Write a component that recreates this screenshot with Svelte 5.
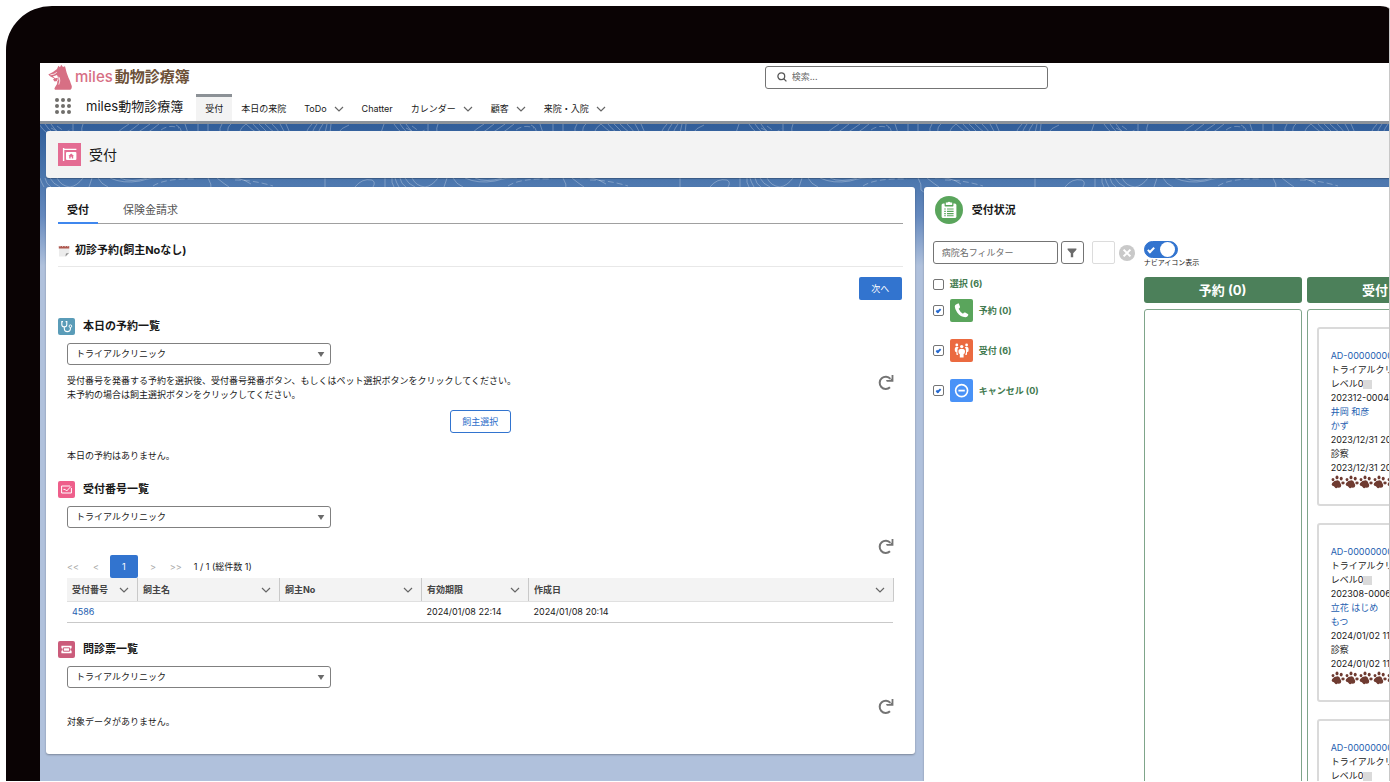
<script>
  const navItems = [
    { label: "受付", active: true },
    { label: "本日の来院" },
    { label: "ToDo", menu: true },
    { label: "Chatter" },
    { label: "カレンダー", menu: true },
    { label: "顧客", menu: true },
    { label: "来院・入院", menu: true },
  ];

  const columns = [
    { label: "受付番号", key: "no" },
    { label: "飼主名", key: "owner" },
    { label: "飼主No", key: "ownerNo" },
    { label: "有効期限", key: "expires" },
    { label: "作成日", key: "created" },
  ];

  const receptions = [
    {
      no: "4586",
      owner: "",
      ownerNo: "",
      expires: "2024/01/08 22:14",
      created: "2024/01/08 20:14",
    },
  ];

  const cards = [
    {
      id: "AD-00000000",
      karte: "202312-0004",
      owner: "井岡 和彦",
      pet: "かず",
      date: "2023/12/31 20",
    },
    {
      id: "AD-00000000",
      karte: "202308-0006",
      owner: "立花 はじめ",
      pet: "もつ",
      date: "2024/01/02 11",
    },
    {
      id: "AD-00000000",
      karte: "202308-0006",
      owner: "立花 はじめ",
      pet: "もつ",
      date: "2024/01/02 11",
    },
  ];

  let statuses = [
    { id: "reserved", label: "予約 (0)", checked: true },
    { id: "received", label: "受付 (6)", checked: true },
    { id: "cancelled", label: "キャンセル (0)", checked: true },
  ];

  let selectAll = false;
  let showNavIcons = true;
  let hospital = "";
</script>

{#snippet chevron()}
  <svg class="chevron" viewBox="0 0 10 10" aria-hidden="true">
    <path d="M1 3 L5 7 L9 3" />
  </svg>
{/snippet}

{#snippet clinicSelect(id)}
  <div class="select">
    <select {id} aria-label="クリニック">
      <option>トライアルクリニック</option>
    </select>
    <svg viewBox="0 0 8 6" aria-hidden="true"><path d="M0 0 H8 L4 6 Z" /></svg>
  </div>
{/snippet}

{#snippet refresh()}
  <button class="refresh" aria-label="更新">
    <svg viewBox="0 0 16 16" aria-hidden="true">
      <path class="arc" d="M12 12.8 A6.1 6.1 0 1 1 12.4 4.4" />
      <path class="tip" d="M15.4 0.6 V7.2 H8.8 L8 5.4 H12.2 L13.6 4 V0.6 Z" />
    </svg>
  </button>
{/snippet}

<div class="device">
  <div class="screen">
    <header class="header">
      <div class="topbar">
        <a href="/" class="logo">
          <svg viewBox="0 0 25 27" aria-hidden="true">
            <path
              class="dog"
              d="M0.3 10.6 L5 8 L9 5 L10.4 1.8 L12 3.2 L13.2 0.8 L15 3 L17 2.2 L18.6 8.4 L20.4 13.6 Q22 16.6 22.8 19.6 Q25 24 22.4 25.8 H7 Q5.8 24.8 7 23.2 Q9.8 20.4 9.4 17 L6.6 17.4 L5 15.4 L6.4 14.4 L2.4 12.6 Z"
            />
            <path
              class="fur"
              d="M2.4 10.8 L6 10.2 L8.8 8.4 M9.4 17 Q10.6 15 10 12.6 M11.4 13.4 Q12.4 17 10.8 20.6"
            />
            <path class="muzzle" d="M4.8 12.4 L9 11 L10 13.8 L7.2 14.2 Z" />
          </svg>
          <span class="brand">miles<b>動物診療簿</b></span>
        </a>
        <div class="search">
          <svg viewBox="0 0 10 10" aria-hidden="true">
            <circle cx="4.3" cy="4.3" r="3.4" />
            <path d="M6.9 6.9 L9.4 9.4" />
          </svg>
          <input type="search" placeholder="検索..." aria-label="検索" />
        </div>
      </div>

      <nav class="navbar">
        <button class="launcher" aria-label="アプリケーションランチャー">
          {#each Array(9) as _}
            <span></span>
          {/each}
        </button>
        <span class="app-name">miles動物診療簿</span>
        <ul class="nav-links">
          {#each navItems as item}
            <li class:active={item.active}>
              <a href="#nav">{item.label}</a>
              {#if item.menu}{@render chevron()}{/if}
            </li>
          {/each}
        </ul>
      </nav>
    </header>

    <main class="main">
      <svg class="backdrop" aria-hidden="true">
        <defs>
          <pattern
            id="contour"
            x="310"
            width="355"
            height="150"
            patternUnits="userSpaceOnUse"
          >
            <g>
              <path
                d="M34 0 Q31 6 31 14 M44 0 Q47 5 52 9 M50 0 Q53 5 58 9 M56 0 Q59 5 64 9 M78 0 V8 M88 0 Q86 4 87 9 M122 9 Q126 5 134 0 M132 9 Q138 5 144 0 M142 9 Q148 5 155 0 M152 9 Q158 5 164 0 M181 1 Q187 4 186 9 M190 0 L193 9 M203 0 V8 M213 0 V8 M225 9 Q224 4 227 0 M233 9 Q232 3 236 0 M244 9 Q246 3 251 0 Q256 5 262 9 M258 0 Q262 5 267 9 M264 0 Q269 5 273 9 M270 0 Q275 5 280 9 M277 0 Q281 4 285 9 M285 0 L290 9 M291 0 L295 9 M311 9 Q313 4 317 0 M317 9 Q319 4 322 0 M323 9 Q325 4 328 0 M330 9 L332 0 M335 9 L336 0 M343 9 Q346 4 354 1"
              />
              <path
                d="M5 63 Q12 54 22 56 Q26 58 23 63 M35 54 V63 M42 54 Q41 58 44 63 M45 54 Q46 58 49 63 M50 54 Q51 60 56 63 M55 54 Q58 60 65 63 M62 54 Q66 62 75 63 Q82 62 88 54 M97 54 L94 63 M103 54 Q106 60 113 63 M115 54 Q128 60 145 57 Q158 53 167 54 M125 54 Q136 59 152 54 M213 54 Q217 60 216 66 Q226 76 234 63 M222 54 Q228 59 234 63 M230 54 Q244 52 256 60 M330 54 V63"
              />
              <path
                class="dashed"
                d="M62 2 L70 8 Q73 8 77 4 M166 6 Q174 0 184 4 M158 62 Q170 54 202 55 M240 56 Q258 56 278 62 M56 4 L66 9"
              />
              <path
                d="M248 63 Q242 84 252 96 Q262 110 250 130 M262 63 Q250 80 262 100 Q270 116 258 136 M40 63 Q30 84 42 108 Q50 124 36 144 M84 63 Q80 100 94 130"
              />
            </g>
          </pattern>
          <linearGradient id="fade" x1="0" y1="0" x2="0" y2="1">
            <stop offset="0" stop-color="#315e9a" />
            <stop offset="0.4" stop-color="#4c77ae" />
            <stop offset="0.65" stop-color="#6589be" />
            <stop offset="1" stop-color="#b0c1dc" />
          </linearGradient>
        </defs>
        <rect width="100%" height="100%" fill="url(#fade)" />
        <rect width="100%" height="100%" fill="url(#contour)" />
      </svg>

      <div class="page-header">
        <svg class="page-icon" viewBox="0 0 23 23" aria-hidden="true">
          <rect width="23" height="23" fill="#e46c93" />
          <path
            d="M5.6 5 V18 M5 6.4 H18.4"
            stroke="#fff"
            stroke-width="1.4"
            fill="none"
          />
          <rect x="8" y="9" width="10.4" height="8" rx="1" fill="#fff" />
          <path
            d="M13.2 10.4 L16 13 H15.2 V15.4 H13.8 V13.8 H12.6 V15.4 H11.2 V13 H10.4 Z"
            fill="#e46c93"
          />
        </svg>
        <h1>受付</h1>
      </div>

      <div class="panels">
        <section class="panel reception">
          <div class="tabs" role="tablist">
            <button role="tab" class="selected" aria-selected="true">受付</button>
            <button role="tab" aria-selected="false">保険金請求</button>
          </div>

          <div class="first-visit">
            <svg viewBox="0 0 12 12" aria-hidden="true">
              <path d="M1 1 H11.4 V8 L8.4 11.4 H1 Z" fill="#ececec" />
              <path d="M0.8 1 H11.2 V3.6 H0.8 Z" fill="#b0584f" />
              <path d="M2 0.4 V2 M4.6 0.4 V2 M7.2 0.4 V2 M9.8 0.4 V2" stroke="#eee" stroke-width="0.7" />
              <path d="M11 8 L8 8.6 L7.4 11.4 Z" fill="#8b8b8b" />
            </svg>
            <h2>初診予約(飼主Noなし)</h2>
          </div>
          <div class="next">
            <button class="primary">次へ</button>
          </div>

          <section class="block">
            <div class="block-title">
              <svg viewBox="0 0 17 17" aria-hidden="true">
                <rect width="17" height="17" rx="2" fill="#5a9cb8" />
                <path
                  d="M5 3.6 H3.8 V6.4 A2.5 2.5 0 0 0 8.8 6.4 V3.6 H7.6 M6.3 9 V10.6 A3 3 0 0 0 12.4 10.6 V9.4"
                  stroke="#fff"
                  stroke-width="1.1"
                  fill="none"
                />
                <circle cx="12.4" cy="8.2" r="1.3" stroke="#fff" fill="none" />
              </svg>
              <h2>本日の予約一覧</h2>
            </div>
            <div class="block-body">
              {@render clinicSelect("clinic-today")}
              <div class="guide">
                <p>
                  受付番号を発番する予約を選択後、受付番号発番ボタン、もしくはペット選択ボタンをクリックしてください。<br
                  />未予約の場合は飼主選択ボタンをクリックしてください。
                </p>
                {@render refresh()}
              </div>
              <div class="choose">
                <button class="outline">飼主選択</button>
              </div>
              <p>本日の予約はありません。</p>
            </div>
          </section>

          <section class="block">
            <div class="block-title">
              <svg viewBox="0 0 17 17" aria-hidden="true">
                <rect width="17" height="17" rx="2" fill="#ee5f8b" />
                <path
                  d="M12 5 H3.6 V12 H13.4 V7 M5.4 8.4 H7.2 L8.6 10 L13 5.4"
                  stroke="#fff"
                  stroke-width="1"
                  fill="none"
                />
              </svg>
              <h2>受付番号一覧</h2>
            </div>
            <div class="block-body">
              {@render clinicSelect("clinic-number")}
              <div class="tools">{@render refresh()}</div>
              <div class="pager">
                <button class="first" disabled>&lt;&lt;</button>
                <button class="prev" disabled>&lt;</button>
                <button class="current">1</button>
                <button class="following" disabled>&gt;</button>
                <button class="last" disabled>&gt;&gt;</button>
                <span>1 / 1 (総件数 1)</span>
              </div>
              <table>
                <thead>
                  <tr>
                    {#each columns as column}
                      <th class={column.key}>
                        <div>{column.label}{@render chevron()}</div>
                      </th>
                    {/each}
                  </tr>
                </thead>
                <tbody>
                  {#each receptions as row}
                    <tr>
                      <td><a href="#reception">{row.no}</a></td>
                      <td>{row.owner}</td>
                      <td>{row.ownerNo}</td>
                      <td>{row.expires}</td>
                      <td>{row.created}</td>
                    </tr>
                  {/each}
                </tbody>
              </table>
            </div>
          </section>

          <section class="block">
            <div class="block-title">
              <svg viewBox="0 0 17 17" aria-hidden="true">
                <rect width="17" height="17" rx="2" fill="#cb5c7b" />
                <path
                  d="M3.4 4.8 H13.6 V7.2 A1.3 1.3 0 0 0 13.6 9.8 V12.2 H3.4 V9.8 A1.3 1.3 0 0 0 3.4 7.2 Z"
                  fill="#fff"
                />
                <path d="M5.4 6.8 H11.6 V10.2 H5.4 Z" fill="#fff" stroke="#cb5c7b" stroke-width="1" />
              </svg>
              <h2>問診票一覧</h2>
            </div>
            <div class="block-body">
              {@render clinicSelect("clinic-sheet")}
              <div class="tools">{@render refresh()}</div>
              <p>対象データがありません。</p>
            </div>
          </section>
        </section>

        <section class="panel status">
          <div class="status-title">
            <svg viewBox="0 0 28 28" aria-hidden="true">
              <circle cx="14" cy="14" r="14" fill="#5aa55c" />
              <rect x="6.6" y="7.4" width="14.8" height="14.6" rx="1.6" fill="#fff" />
              <path
                d="M9.6 7 H18.4 V9.4 Q18.4 10.6 17.2 10.6 H10.8 Q9.6 10.6 9.6 9.4 Z"
                fill="#5aa55c"
              />
              <path d="M10.8 6.4 H12.4 Q14 5 15.6 6.4 H17.2 V9 H10.8 Z" fill="#fff" />
              <path
                d="M9.2 13 H10.8 M12 13 H18.6 M9.2 15.4 H10.8 M12 15.4 H18.6 M9.2 17.6 H10.8 M12 17.6 H18.6 M9.2 19.8 H10.8 M12 19.8 H18.6"
                stroke="#5aa55c"
                stroke-width="1.1"
              />
            </svg>
            <h2>受付状況</h2>
          </div>

          <div class="status-body">
            <div class="filters">
              <div class="filter-row">
                <input
                  type="text"
                  placeholder="病院名フィルター"
                  aria-label="病院名フィルター"
                  bind:value={hospital}
                />
                <button class="filter" aria-label="フィルター">
                  <svg viewBox="0 0 10 10" aria-hidden="true">
                    <path d="M0.6 0.6 H9.4 V1.8 L6.2 5.2 V9.2 H3.8 V5.2 L0.6 1.8 Z" />
                  </svg>
                </button>
                <button class="blank" aria-label="色"></button>
                <button class="clear" aria-label="クリア">
                  <svg viewBox="0 0 16 16" aria-hidden="true">
                    <circle cx="8" cy="8" r="8" fill="#c9c9c9" />
                    <path d="M4.6 4.6 L11.4 11.4 M11.4 4.6 L4.6 11.4" stroke="#fff" stroke-width="2" />
                  </svg>
                </button>
              </div>

              <label class="check all">
                <input type="checkbox" bind:checked={selectAll} />
                選択 (6)
              </label>
              {#each statuses as status}
                <label class="check">
                  <input type="checkbox" bind:checked={status.checked} />
                  <svg viewBox="0 0 23 23" aria-hidden="true">
                    {#if status.id === "reserved"}
                      <rect width="23" height="23" rx="2" fill="#5aa55c" />
                      <path
                        d="M6 5.4 L8 4.4 Q8.6 4.2 9 5 L10 7.8 Q10.2 8.6 9.4 9.2 L8.6 9.8 Q10 13 13 14.8 L13.8 13.8 Q14.4 13.2 15.2 13.6 L17.8 15 Q18.6 15.4 18.2 16.2 Q17.4 18.2 15.4 18.2 Q10.4 17.8 7.2 13.4 Q4.8 10 4.8 7.4 Q4.8 6 6 5.4 Z"
                        fill="#fff"
                      />
                    {:else if status.id === "received"}
                      <rect width="23" height="23" rx="2" fill="#eb6a40" />
                      <g fill="#fff">
                        <circle cx="11.7" cy="7.6" r="1.7" />
                        <path d="M10 10 H13.4 Q15.4 10.4 15 12.8 L14.6 14.4 L13.6 15 V18.4 H9.8 V15 L8.8 14.4 L8.4 12.8 Q8 10.4 10 10 Z" />
                        <circle cx="6.8" cy="6" r="1.4" />
                        <circle cx="16.6" cy="6" r="1.4" />
                        <path d="M6 8 H8.6 Q6.8 10 7.4 13.2 L8.2 16 L6.4 15.8 V13.2 L5 12.4 Q4.2 8.8 6 8 Z" />
                        <path d="M17.4 8 H14.8 Q16.6 10 16 13.2 L15.2 16 L17 15.8 V13.2 L18.4 12.4 Q19.2 8.8 17.4 8 Z" />
                      </g>
                    {:else}
                      <rect width="23" height="23" rx="2" fill="#4992f7" />
                      <circle cx="11.6" cy="11.6" r="6" fill="none" stroke="#fff" stroke-width="1.6" />
                      <path d="M8.4 11.6 H14.8" stroke="#fff" stroke-width="1.8" />
                    {/if}
                  </svg>
                  {status.label}
                </label>
              {/each}
            </div>

            <div class="board">
              <label class="toggle">
                <input type="checkbox" role="switch" bind:checked={showNavIcons} />
                <span>ナビアイコン表示</span>
              </label>
              <div class="lanes">
                <div class="lane">
                  <h3>予約 (0)</h3>
                  <div class="lane-body"></div>
                </div>
                <div class="lane">
                  <h3>受付 (6)</h3>
                  <div class="lane-body">
                    {#each cards as card}
                      <article class="card">
                        <a href="#record">{card.id}</a>
                        <span>トライアルクリニック</span>
                        <span class="level">レベル0<i></i></span>
                        <span>{card.karte}</span>
                        <a href="#owner">{card.owner}</a>
                        <a href="#pet">{card.pet}</a>
                        <span>{card.date}</span>
                        <span>診察</span>
                        <span>{card.date}</span>
                        <div class="paws">
                          {#each Array(5) as _}
                            <svg viewBox="0 0 14 14" aria-hidden="true">
                              <path d="M1.2 8 Q3 5.4 6.6 5.2 Q8.8 5.6 9.2 7.8 Q11 10 9.8 12 Q8.6 13 6.6 12.6 Q4.8 14 3.8 12.2 Q3.2 11.2 1.4 10.8 Q0 9.6 1.2 8 Z" />
                              <ellipse cx="2" cy="4.6" rx="1.4" ry="1.7" />
                              <ellipse cx="6" cy="2.4" rx="1.5" ry="1.9" />
                              <ellipse cx="10.2" cy="3.6" rx="1.5" ry="1.9" />
                              <ellipse cx="12" cy="8" rx="1.7" ry="1.4" />
                            </svg>
                          {/each}
                        </div>
                      </article>
                    {/each}
                  </div>
                </div>
              </div>
            </div>
          </div>
        </section>
      </div>
    </main>
  </div>
</div>

<style>
  :global(body) {
    background: #fff;
    color: #181818;
    font-family: Inter, "Noto Sans CJK JP", sans-serif;
    font-size: 9px;
    line-height: 14px;
  }

  h1,
  h2,
  h3,
  p,
  ul {
    margin: 0;
    padding: 0;
  }

  button,
  input,
  select {
    box-sizing: border-box;
    font: inherit;
    color: inherit;
    margin: 0;
    padding: 0;
  }

  button {
    background: none;
    border: 0;
    cursor: pointer;
  }

  svg {
    display: block;
    flex: none;
  }

  a {
    color: #2460b0;
    text-decoration: none;
  }

  h2 {
    font-size: 11px;
    font-weight: 700;
    line-height: 17px;
  }

  .device {
    box-sizing: border-box;
    height: calc(100vh - 7px);
    margin: 6px 0 1px 6px;
    padding: 57px 0 0 34px;
    background: #0a0304;
    border-right: 1px solid #c8c8c8;
    border-radius: 46px 10px 0 0 / 44px 3px 0 0;
    overflow: hidden;
  }

  .screen {
    height: 100%;
    background: #b0c1dc;
    display: flex;
    flex-direction: column;
    overflow: hidden;
  }

  /* header */
  .header {
    background: #fff;
    border-bottom: 3px solid #8c939b;
  }

  .topbar {
    display: grid;
    grid-template-columns: 21fr 283px 10fr;
    align-items: center;
    height: 28px;
    padding-left: 8px;
  }

  .logo {
    display: flex;
    align-items: center;
    gap: 2px;
  }

  .logo svg {
    width: 25px;
    height: 27px;
  }

  .dog {
    fill: #d76f84;
  }

  .fur {
    fill: none;
    stroke: #fff;
    stroke-width: 0.8;
  }

  .muzzle {
    fill: #fff;
  }

  .brand {
    color: #d76f84;
    font-size: 15px;
    line-height: 20px;
    font-weight: 500;
  }

  .brand b {
    margin-left: 2px;
    color: #6d5138;
  }

  .search {
    display: flex;
    align-items: center;
    gap: 5px;
    box-sizing: border-box;
    height: 23px;
    padding: 0 11px;
    border: 1px solid #747474;
    border-radius: 3px;
  }

  .search svg {
    width: 10px;
    height: 10px;
    fill: none;
    stroke: #555;
    stroke-width: 1.3;
  }

  .search input {
    flex: 1;
    min-width: 0;
    border: 0;
    outline: 0;
    background: none;
  }

  input::placeholder {
    color: #6b6b6b;
    opacity: 1;
  }

  .navbar {
    display: flex;
    align-items: center;
    height: 30px;
    padding-left: 15px;
  }

  .launcher {
    display: grid;
    grid-template-columns: repeat(3, 4px);
    gap: 2px;
    margin-right: 15px;
  }

  .launcher span {
    width: 4px;
    height: 4px;
    border-radius: 50%;
    background: #706e6b;
  }

  .app-name {
    margin-right: 13px;
    font-size: 13px;
    line-height: 20px;
  }

  .nav-links {
    display: flex;
    align-self: flex-end;
    list-style: none;
  }

  .nav-links li {
    display: flex;
    align-items: center;
    gap: 7px;
    height: 24px;
    padding: 0 9px;
    border-top: 3px solid transparent;
  }

  .nav-links li.active {
    background: #f3f3f3;
    border-color: #8c9196;
  }

  .nav-links a {
    color: #181818;
  }

  .chevron {
    width: 10px;
    height: 10px;
    fill: none;
    stroke: #666;
    stroke-width: 1.2;
  }

  /* page */
  .main {
    position: relative;
    flex: 1;
    min-height: 0;
    display: flex;
    flex-direction: column;
    gap: 9px;
    padding: 7px 0 0 6px;
  }

  .backdrop {
    position: absolute;
    top: 0;
    left: 0;
    width: 100%;
    height: 142px;
  }

  .backdrop path {
    fill: none;
    stroke: #fff;
    stroke-opacity: 0.28;
    stroke-width: 1;
  }

  .backdrop .dashed {
    stroke-dasharray: 6 3;
  }

  .page-header {
    position: relative;
    display: flex;
    align-items: center;
    gap: 8px;
    height: 47px;
    padding-left: 12px;
    background: #f3f3f3;
    border-radius: 3px 0 0 3px;
    box-shadow: 0 1px 1px rgba(0, 0, 0, 0.25);
  }

  .page-icon {
    width: 23px;
    height: 23px;
  }

  h1 {
    font-size: 14px;
    line-height: 20px;
    font-weight: 400;
  }

  .panels {
    position: relative;
    flex: 1;
    min-height: 0;
    display: grid;
    grid-template-columns: minmax(0, 28fr) minmax(0, 15fr);
    gap: 9px;
  }

  .panel {
    background: #fff;
    border-radius: 3px;
    box-shadow: 0 1px 2px rgba(0, 0, 0, 0.3);
  }

  .reception {
    align-self: start;
    padding: 8px 12px 25px;
  }

  .tabs {
    display: flex;
    gap: 16px;
    border-bottom: 1px solid #a0a0a0;
  }

  .tabs button {
    height: 29px;
    padding: 2px 9px 0;
    margin-bottom: -1px;
    border-bottom: 2px solid transparent;
    font-size: 11px;
    color: #555;
  }

  .tabs .selected {
    border-color: #3f87ee;
    color: #181818;
    font-weight: 700;
  }

  .first-visit {
    display: flex;
    align-items: center;
    gap: 5px;
    padding: 18px 0 7px;
    border-bottom: 1px solid #e8e8e8;
  }

  .first-visit svg {
    width: 12px;
    height: 12px;
  }

  .next {
    display: flex;
    justify-content: flex-end;
    padding: 10px 1px 0 0;
  }

  .primary {
    width: 43px;
    height: 23px;
    border-radius: 2px;
    background: #3274cf;
    color: #fff;
  }

  .block {
    padding-top: 18px;
  }

  .block-title {
    display: flex;
    align-items: center;
    gap: 8px;
  }

  .block-title svg {
    width: 17px;
    height: 17px;
  }

  .block-body {
    padding: 8px 9px 0;
  }

  .select {
    position: relative;
    width: 264px;
  }

  .select select {
    display: block;
    width: 100%;
    height: 22px;
    padding: 0 20px 0 8px;
    appearance: none;
    background: #fff;
    border: 1px solid #808080;
    border-radius: 3px;
  }

  .select svg {
    position: absolute;
    right: 6px;
    top: 9px;
    width: 8px;
    height: 5px;
    fill: #6b6b6b;
    pointer-events: none;
  }

  .guide {
    display: flex;
    justify-content: space-between;
    align-items: flex-start;
    padding-top: 9px;
  }

  .refresh svg {
    width: 16px;
    height: 17px;
  }

  .arc {
    fill: none;
    stroke: #747474;
    stroke-width: 2;
  }

  .tip {
    fill: #747474;
  }

  .choose {
    display: flex;
    justify-content: center;
    padding: 8px 0 16px;
  }

  .outline {
    width: 61px;
    height: 23px;
    border: 1px solid #3274cf;
    border-radius: 3px;
    color: #2f6fca;
  }

  .tools {
    display: flex;
    justify-content: flex-end;
    padding-top: 10px;
  }

  .pager {
    display: flex;
    align-items: center;
  }

  .pager button {
    height: 23px;
    color: #a8a8a8;
  }

  .pager .first {
    padding-right: 8px;
  }

  .pager .prev {
    padding: 0 11px 0 6px;
  }

  .pager .following {
    padding: 0 8px 0 12px;
  }

  .pager .last {
    padding: 0 12px 0 6px;
  }

  .pager .current {
    width: 28px;
    border-radius: 2px;
    background: #3274cf;
    color: #fff;
  }

  table {
    width: 100%;
    table-layout: fixed;
    border-collapse: collapse;
    border-bottom: 1px solid #c9c9c9;
  }

  th {
    height: 23px;
    padding: 0;
    background: #f3f3f3;
    border-right: 1px solid #c9c9c9;
    border-bottom: 1px solid #e0e0e0;
    color: #444;
    text-align: left;
  }

  th div {
    display: flex;
    align-items: center;
    justify-content: space-between;
    padding: 0 8px 0 5px;
  }

  td {
    height: 20px;
    padding: 0 5px;
  }

  .no {
    width: 70px;
  }

  .owner,
  .ownerNo {
    width: 141px;
  }

  .expires {
    width: 106px;
  }

  /* status board */
  .status {
    border-radius: 3px 0 0 0;
    overflow: hidden;
  }

  .status-title {
    display: flex;
    align-items: center;
    gap: 9px;
    padding: 9px 11px 17px;
  }

  .status-title svg {
    width: 28px;
    height: 28px;
  }

  .status-body {
    display: grid;
    grid-template-columns: 202px minmax(0, 1fr);
    gap: 9px;
    padding-left: 9px;
  }

  .filter-row {
    display: flex;
    align-items: center;
    margin-bottom: 13px;
  }

  .filter-row input {
    width: 125px;
    height: 23px;
    margin-right: 3px;
    padding: 0 8px;
    border: 1px solid #747474;
    border-radius: 3px;
  }

  .filter-row button {
    display: grid;
    place-items: center;
    flex: none;
  }

  .filter-row .filter {
    width: 23px;
    height: 23px;
    margin-right: 8px;
    border: 1px solid #747474;
    border-radius: 3px;
  }

  .filter svg {
    width: 10px;
    height: 10px;
    fill: #6b6b6b;
  }

  .filter-row .blank {
    width: 23px;
    height: 23px;
    margin-right: 4px;
    border: 1px solid #dcdcdc;
    border-radius: 2px;
  }

  .clear svg {
    width: 16px;
    height: 16px;
  }

  .check {
    display: flex;
    align-items: center;
    gap: 6px;
    height: 23px;
    margin-bottom: 17px;
    color: #427a4f;
    font-weight: 700;
  }

  .check.all {
    height: 14px;
    margin-bottom: 8px;
  }

  .check input {
    display: grid;
    place-items: center;
    width: 11px;
    height: 11px;
    appearance: none;
    background: #fff;
    border: 1px solid #747474;
    border-radius: 2px;
  }

  .check input:checked::before {
    content: "";
    width: 1px;
    height: 3px;
    border: solid #2468cf;
    border-width: 0 2px 2px 0;
    rotate: 45deg;
  }

  .check svg {
    width: 23px;
    height: 23px;
  }

  .toggle {
    display: flex;
    flex-direction: column;
    width: 80px;
    font-size: 7px;
    line-height: 10px;
  }

  .toggle input {
    display: flex;
    align-items: center;
    justify-content: space-around;
    width: 34px;
    height: 17px;
    appearance: none;
    background: #c9c9c9;
    border: 1px solid #3274cf;
    border-radius: 9px;
  }

  .toggle input:checked {
    background: #3274cf;
  }

  .toggle input::before {
    content: "";
    width: 2px;
    height: 5px;
    margin-left: 3px;
    border: solid #fff;
    border-width: 0 2px 2px 0;
    rotate: 45deg;
  }

  .toggle input::after {
    content: "";
    width: 15px;
    height: 15px;
    margin-left: 4px;
    border-radius: 50%;
    background: #fff;
  }

  .lanes {
    display: flex;
    gap: 5px;
    padding-top: 9px;
  }

  .lane {
    flex: none;
    width: 158px;
    display: flex;
    flex-direction: column;
    gap: 6px;
  }

  h3 {
    border-radius: 3px;
    background: #4c805a;
    color: #fff;
    font-size: 13px;
    line-height: 26px;
    text-align: center;
  }

  .lane-body {
    flex: 1;
    display: flex;
    flex-direction: column;
    gap: 17px;
    padding: 17px 9px;
    border: 1px solid #7fa58a;
    border-radius: 3px;
  }

  .card {
    display: flex;
    flex-direction: column;
    padding: 20px 12px 15px;
    border: 2px solid #dadada;
    border-radius: 3px;
    white-space: nowrap;
  }

  .level {
    display: flex;
    align-items: center;
  }

  .level i {
    width: 9px;
    height: 9px;
    background: #dadada;
  }

  .paws {
    display: flex;
  }

  .paws svg {
    width: 14px;
    height: 14px;
    fill: #6f3b31;
  }
</style>
